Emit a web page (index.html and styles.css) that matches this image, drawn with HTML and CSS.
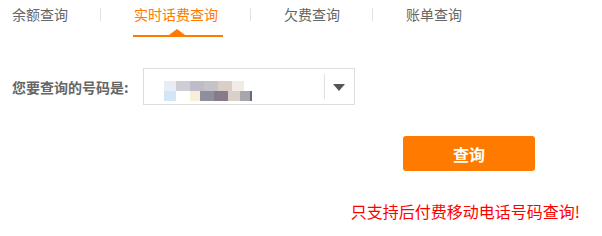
FILE: index.html
```html
<!DOCTYPE html>
<html lang="zh-CN">
<head>
<meta charset="UTF-8">
<title>话费查询</title>
<link rel="stylesheet" href="styles.css">
</head>
<body>
    <div class="page">
        <div class="tabs">
            <span class="tab">余额查询</span>
            <span class="sep"></span>
            <span class="tab active">实时话费查询</span>
            <span class="sep"></span>
            <span class="tab">欠费查询</span>
            <span class="sep"></span>
            <span class="tab">账单查询</span>
        </div>

        <div class="form-row">
            <label class="label">您要查询的号码是:</label>
            <div class="select">
                <div class="masked">
                    <div class="mrow">
                        <i class="c1"></i><i class="c2"></i><i class="c3"></i><i class="c4"></i><i class="c5"></i><i class="c6"></i>
                    </div>
                    <div class="mrow">
                        <i class="c7"></i><i class="c0"></i><i class="c8"></i><i class="c9"></i><i class="c10"></i><i class="c11"></i><i class="c12"></i>
                    </div>
                </div>
                <span class="divider"></span>
                <span class="arrow"></span>
            </div>
        </div>

        <div class="btn-row">
            <button class="btn">查询</button>
        </div>

        <p class="notice">只支持后付费移动电话号码查询!</p>
    </div>
</body>
</html>
```
FILE: styles.css
```css
body {
    margin: 0;
    font-family: "Noto Sans CJK SC", "DejaVu Sans", sans-serif;
    background: #fff;
}

.page {
    width: 602px;
}

.tabs {
    display: flex;
    align-items: center;
    height: 38px;
    padding: 0 0 0 12px;
    box-sizing: border-box;
    font-size: 14px;
    line-height: 20px;
}

.tab {
    position: relative;
    color: #666;
    margin-top: -10px;
}

.tab.active {
    color: #ff7a00;
}

/* orange bar with a notch under the active tab */
.tab.active::after {
    content: "";
    position: absolute;
    left: -1px;
    right: -5px;
    bottom: -13px;
    height: 2px;
    background: #ff7a00;
}

.tab.active::before {
    content: "";
    position: absolute;
    left: 50%;
    margin-left: -7px;
    bottom: -11px;
    border-left: 8px solid transparent;
    border-right: 8px solid transparent;
    border-bottom: 6px solid #ff7a00;
}

.sep {
    width: 1px;
    height: 13px;
    background: #e2e2e2;
    margin: -10px 33px 0 32px;
}

.form-row {
    display: flex;
    align-items: center;
    margin-top: 30px;
    padding-left: 12px;
}

.label {
    width: 131px;
    font-size: 14px;
    font-weight: bold;
    color: #666;
}

.select {
    width: 212px;
    height: 37px;
    border: 1px solid #ddd;
    box-sizing: border-box;
    display: flex;
    align-items: center;
    padding-left: 20px;
}

.masked {
    width: 160px;
    margin-top: 8px;
}

.mrow {
    display: flex;
    height: 10px;
}

.mrow i {
    display: block;
    width: 14px;
    height: 10px;
}

.mrow .c0 { background: #fff; }
.mrow .c1 { background: #e6edf4; width: 12px; }
.mrow .c2 { background: #cdcdd6; }
.mrow .c3 { background: #bdbcc8; }
.mrow .c4 { background: #c6c2ca; }
.mrow .c5 { background: #d9cec8; }
.mrow .c6 { background: #f3ebe6; width: 12px; }
.mrow .c7 { background: #d4e6f6; width: 12px; }
.mrow .c8 { background: #faeeda; width: 10px; }
.mrow .c9 { background: #8e8e9e; }
.mrow .c10 { background: #877b8a; }
.mrow .c11 { background: #d9d0cb; width: 12px; }
.mrow .c12 { background: #a6a7ae; width: 10px; border-right: 2px solid #6a6a7a; }

.divider {
    width: 1px;
    height: 25px;
    background: #e0e0e0;
    margin-left: 0;
}

.arrow {
    margin-left: 8px;
    border-left: 6px solid transparent;
    border-right: 6px solid transparent;
    border-top: 7px solid #555;
    margin-top: 2px;
}

.btn-row {
    display: flex;
    justify-content: flex-end;
    padding-right: 67px;
    margin-top: 31px;
}

.btn {
    width: 132px;
    height: 35px;
    border: none;
    border-radius: 3px;
    background: #ff7b00;
    color: #fff;
    font-family: inherit;
    font-size: 16px;
    font-weight: bold;
    cursor: pointer;
}

.notice {
    margin: 30px 0 0;
    padding-right: 22px;
    text-align: right;
    font-size: 16px;
    line-height: 20px;
    color: #f00;
}
```
